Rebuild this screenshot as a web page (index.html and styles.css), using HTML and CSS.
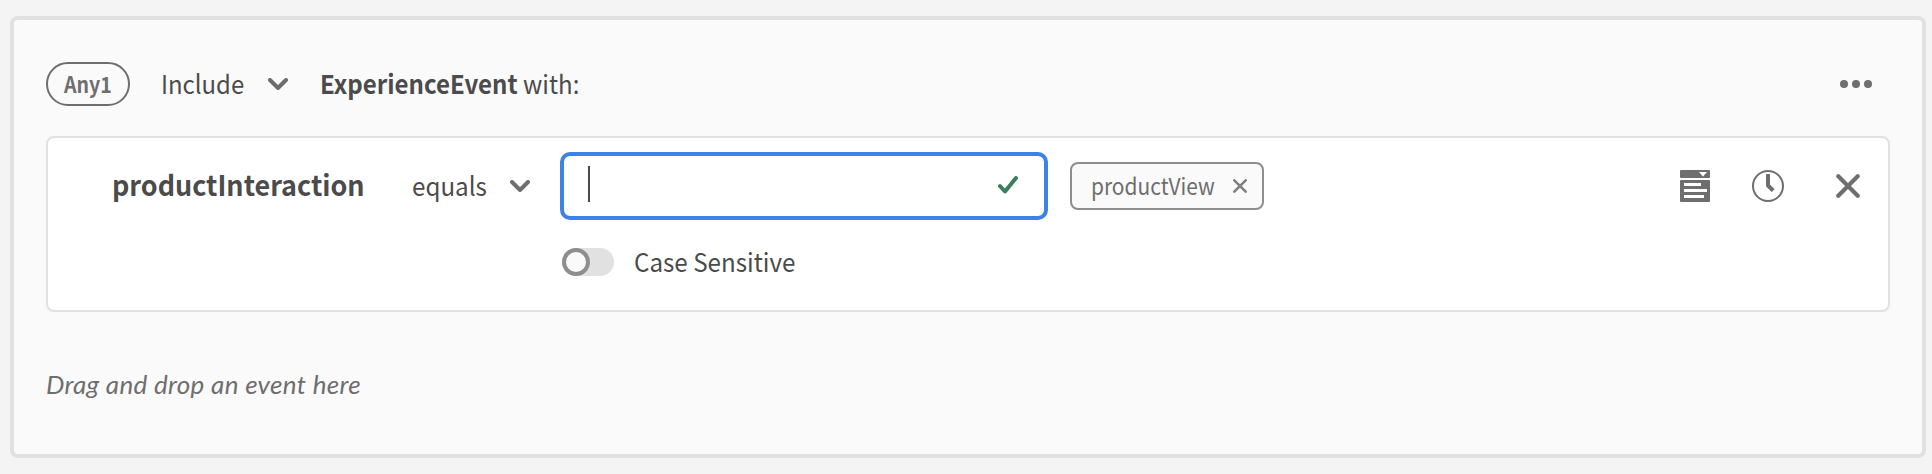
FILE: index.html
```html
<!DOCTYPE html>
<html lang="en">
<head>
<meta charset="utf-8">
<title>Event rule builder</title>
<link rel="stylesheet" href="styles.css">
</head>
<body>
<section class="panel">
  <header class="panel-head">
    <span class="pill"><span class="text pill-text">Any1</span></span>
    <span class="picker include"><span class="text include-text">Include</span><svg class="chevron" width="20" height="12" viewBox="0 0 20 12"><path d="M2 2 10 10 18 2"/></svg></span>
    <span class="text event"><b>ExperienceEvent</b> with:</span>
    <svg class="more" width="32" height="8" viewBox="0 0 32 8"><circle cx="4" cy="4" r="4"/><circle cx="16" cy="4" r="4"/><circle cx="28" cy="4" r="4"/></svg>
  </header>
  <div class="card">
    <div class="rule">
      <span class="field"><span class="text field-text">productInteraction</span></span>
      <span class="picker equals"><span class="text equals-text">equals</span><svg class="chevron" width="20" height="12" viewBox="0 0 20 12"><path d="M2 2 10 10 18 2"/></svg></span>
      <div class="input">
        <span class="caret"></span>
        <svg class="check" width="20" height="18" viewBox="0 0 20 18"><path d="M2 10 7 15.5 18 2"/></svg>
      </div>
      <span class="tag"><span class="text tag-text">productView</span><svg class="tag-x" width="14" height="14" viewBox="0 0 14 14"><path d="M1.3 1.3 12.7 12.7M12.7 1.3 1.3 12.7"/></svg></span>
      <div class="actions">
        <svg class="list" width="30" height="32" viewBox="0 0 30 32"><path fill-rule="evenodd" d="M1 0H29A1 1 0 0 1 30 1V7A1 1 0 0 1 29 8H1A1 1 0 0 1 0 7V1A1 1 0 0 1 1 0ZM19 2 23 6.500 27 2Z"/><path fill-rule="evenodd" d="M1 10H29A1 1 0 0 1 30 11V31A1 1 0 0 1 29 32H1A1 1 0 0 1 0 31V11A1 1 0 0 1 1 10ZM4 13V16H21V13ZM4 19V22H27V19ZM4 25V28H24V25Z"/></svg>
        <svg class="clock" width="32" height="32" viewBox="0 0 32 32"><circle cx="16" cy="16" r="15"/><path d="M16 4V15.500L21.200 20.700"/></svg>
        <svg class="close" width="24" height="24" viewBox="0 0 24 24"><path d="M2.300 2.300 21.700 21.700M21.700 2.300 2.300 21.700"/></svg>
      </div>
    </div>
    <div class="option">
      <span class="switch"><span class="knob"></span></span>
      <span class="text option-text">Case Sensitive</span>
    </div>
  </div>
  <p class="hint">Drag and drop an event here</p>
</section>
</body>
</html>
```
FILE: styles.css
```css
* { box-sizing: border-box; }
body {
  margin: 0;
  padding: 16px 6px 16px 10px;
  height: 474px;
  background: #f4f4f4;
  color: #4b4b4b;
  font-family: "Noto Sans CJK SC", "Noto Sans", sans-serif;
  font-size: 26px;
  line-height: 36px;
  white-space: nowrap;
  overflow: hidden;
}
svg { display: block; flex: none; }
/* Slightly condensed labels */
.text { display: inline-block; padding-bottom: 2px; transform-origin: 0 50%; }
.panel {
  height: 442px;
  padding: 42px 32px 0;
  border: 4px solid #e1e1e1;
  border-radius: 8px;
  background: #fafafa;
}
.panel-head { display: flex; align-items: center; height: 44px; }
.pill {
  display: flex;
  align-items: center;
  justify-content: center;
  width: 84px;
  height: 44px;
  border: 2px solid #6e6e6e;
  border-radius: 22px;
  color: #6e6e6e;
  font-size: 22px;
  font-weight: 700;
}
.pill-text { transform: scaleX(0.89); transform-origin: 50% 50%; }
.picker { display: flex; align-items: center; justify-content: space-between; flex: none; }
.include { width: 128px; margin-left: 30px; }
.include-text { transform: translateX(1px) scaleX(0.92); }
.chevron, .check, .tag-x, .clock, .close { fill: none; stroke: #6e6e6e; stroke-linecap: round; stroke-linejoin: round; }
.chevron { stroke-width: 4; }
.event { margin-left: 32px; transform: scaleX(0.926); }
.more { margin-left: auto; margin-right: 18px; fill: #6e6e6e; }
.card {
  height: 176px;
  margin-top: 30px;
  padding: 14px 28px 0 64px;
  border: 2px solid #e1e1e1;
  border-radius: 8px;
  background: #fff;
}
.rule { display: flex; align-items: center; height: 68px; }
.field { width: 299px; font-size: 28px; font-weight: 700; }
.field-text { padding-bottom: 3px; transform: translateY(-1px) scaleX(0.963); }
.equals { width: 119px; }
.equals-text { transform: translateX(1px) scaleX(0.93); }
.input {
  display: flex;
  align-items: center;
  justify-content: space-between;
  width: 488px;
  height: 68px;
  margin-left: 30px;
  padding: 0 26px 4px 24px;
  border: 4px solid #3d82e6;
  border-radius: 10px;
  background: #fff;
}
.caret { width: 2px; height: 36px; background: #4b4b4b; }
.check { margin-top: 2px; stroke: #3a8060; stroke-width: 4; }
.tag {
  display: flex;
  align-items: center;
  justify-content: space-between;
  width: 194px;
  height: 48px;
  margin-left: 22px;
  padding: 0 15px 0 19px;
  border: 2px solid #8e8e8e;
  border-radius: 8px;
  background: #fafafa;
  color: #6e6e6e;
  font-size: 23px;
}
.tag-text { transform: scaleX(0.91); }
.tag-x { stroke: #808080; stroke-width: 2.6; }
.actions { display: flex; align-items: center; margin-left: auto; }
.list { fill: #6e6e6e; }
.clock { margin-left: 42px; stroke-width: 2; }
.clock path { stroke-width: 4; stroke-linecap: butt; }
.close { margin-left: 52px; stroke-width: 4.200; }
.option { display: flex; align-items: center; height: 28px; margin: 28px 0 0 450px; }
.switch { width: 52px; height: 28px; border-radius: 14px; background: #e1e1e1; }
.knob { display: block; width: 28px; height: 28px; border: 4px solid #8e8e8e; border-radius: 50%; background: #fafafa; }
.option-text { margin-left: 20px; transform: scaleX(0.93); }
.hint {
  margin: 54px 0 0;
  color: #6e6e6e;
  font-family: Lato, "Open Sans", sans-serif;
  font-style: italic;
  letter-spacing: 0.31px;
}
```
